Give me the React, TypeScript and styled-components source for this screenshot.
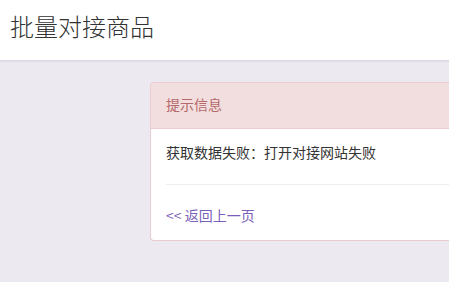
import React, { FC } from 'react'
import styled, { createGlobalStyle } from 'styled-components'

const GlobalStyle = createGlobalStyle`
  html, body {
    margin: 0;
    padding: 0;
    overflow: hidden;
    background-color: #ece9f1;
    font-family: "Noto Sans CJK SC", "Noto Sans", sans-serif;
    color: #333;
  }
`

const StyleHeader = styled.header`
  display: flex;
  align-items: center;
  height: 50px;
  padding: 0 10px 10px;
  background-color: #fff;
  border-bottom: 2px solid #dedae8;
`

const StyleTitle = styled.h1`
  margin: 0;
  font-size: 24px;
  font-weight: 300;
  color: #333;
`

const StyleMain = styled.main`
  padding: 20px 0 0 150px;
`

const StylePanel = styled.div`
  background-color: #fff;
  border: 1px solid #ebccd1;
  border-right: 0;
  border-radius: 4px 0 0 4px;
`

const StylePanelHeading = styled.div`
  display: flex;
  align-items: center;
  height: 42px;
  padding: 0 15px 3px;
  background-color: #f2dede;
  border-bottom: 1px solid #ebccd1;
  border-radius: 3px 0 0 0;
  color: #b5696a;
  font-size: 14px;
`

const StylePanelBody = styled.div`
  padding: 13px 0 15px 15px;
  font-size: 14px;
  line-height: 20px;
`

const StyleDivider = styled.hr`
  margin: 22px 0 20px;
  border: 0;
  border-top: 1px solid #eee;
`

const StyleBackLink = styled.a`
  color: #7b5fb8;
  text-decoration: none;
  cursor: pointer;
`

const App: FC = () => {
  return (
    <>
      <GlobalStyle />
      <StyleHeader>
        <StyleTitle>批量对接商品</StyleTitle>
      </StyleHeader>
      <StyleMain>
        <StylePanel>
          <StylePanelHeading>提示信息</StylePanelHeading>
          <StylePanelBody>
            <div>获取数据失败：打开对接网站失败</div>
            <StyleDivider />
            <StyleBackLink>&lt;&lt; 返回上一页</StyleBackLink>
          </StylePanelBody>
        </StylePanel>
      </StyleMain>
    </>
  )
}

export default App
